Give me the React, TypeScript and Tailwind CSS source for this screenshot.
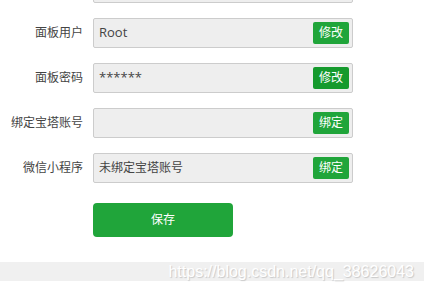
import React from "react";

const ROWS = [
  { label: "面板用户", value: "Root", latin: true, action: "修改", btn: "bg-[#20a53a]" },
  { label: "面板密码", value: "******", latin: true, action: "修改", btn: "bg-[#159a2d]" },
  { label: "绑定宝塔账号", value: "", latin: false, action: "绑定", btn: "bg-[#20a53a]" },
  { label: "微信小程序", value: "未绑定宝塔账号", latin: false, action: "绑定", btn: "bg-[#20a53a]" },
];

const Field = ({
  value,
  latin,
  action,
  btn,
}: {
  value: string;
  latin: boolean;
  action: string;
  btn: string;
}) => (
  <div className="flex h-[30px] w-[260px] items-center justify-between rounded-[2px] border border-[#cccccc] bg-[#eeeeee] pl-[5px] pr-[3px]">
    <span
      className={
        latin
          ? "font-['Open_Sans',sans-serif] text-[13px] text-[#444]"
          : "text-[12px] text-[#444]"
      }
    >
      {value}
    </span>
    <button className={`h-[22px] w-[36px] rounded-[2px] text-[12px] leading-[22px] text-white ${btn}`}>
      {action}
    </button>
  </div>
);

export default function App() {
  return (
    <div className="h-[289px] w-[424px] overflow-hidden bg-white font-['Noto_Sans','Noto_Sans_CJK_SC',sans-serif]">
      <div className="flex h-[3px] flex-col justify-end overflow-hidden pl-[93px]">
        <div className="h-[30px] w-[260px] shrink-0 rounded-[2px] border border-[#cccccc] bg-[#eeeeee]" />
      </div>
      <div className="mt-[15px] flex flex-col gap-[15px]">
        {ROWS.map((row, index) => (
          <div key={index} className="flex items-center">
            <label className="w-[83px] text-right text-[12px] text-[#444]">{row.label}</label>
            <div className="ml-[10px]">
              <Field value={row.value} latin={row.latin} action={row.action} btn={row.btn} />
            </div>
          </div>
        ))}
      </div>
      <div className="mt-[20px] pl-[93px]">
        <button className="h-[34px] w-[140px] rounded-[4px] bg-[#20a53a] text-[12px] text-white">
          保存
        </button>
      </div>
      <div className="mt-[25px] flex h-[19px] items-center justify-end bg-[#f0f0f0] pr-[10px]">
        <span className="font-['Liberation_Sans',sans-serif] text-[16px] leading-none text-white [text-shadow:1px_1px_1px_#c8c8c8]">
          https://blog.csdn.net/qq_38626043
        </span>
      </div>
    </div>
  );
}
